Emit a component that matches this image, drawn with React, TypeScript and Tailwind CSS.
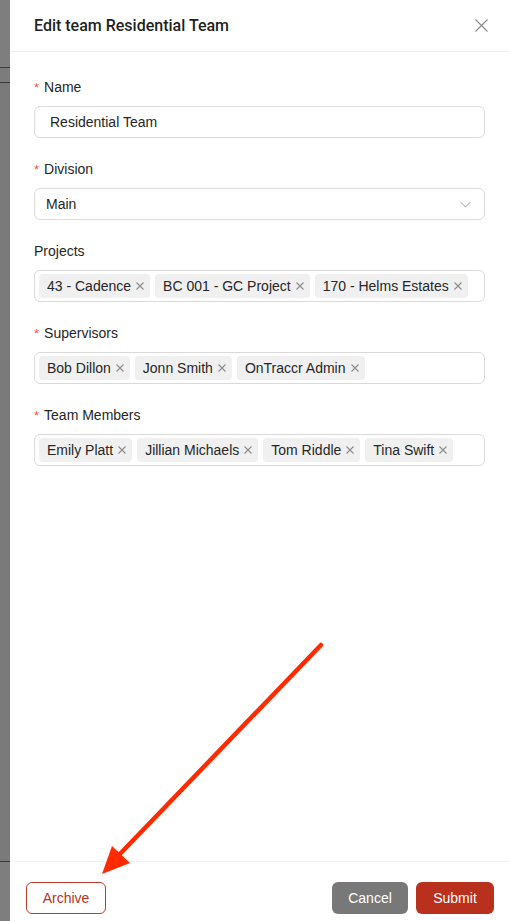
import React from "react";

const font = { fontFamily: '"Liberation Sans", Arial, sans-serif' };

function CloseSmall() {
  return (
    <svg width="8" height="8" viewBox="0 0 8 8" className="shrink-0">
      <path d="M0.5 0.5 L7.5 7.5 M7.5 0.5 L0.5 7.5" stroke="#8c8c8c" strokeWidth="1.1" />
    </svg>
  );
}

function Tag({ text }: { text: string }) {
  return (
    <span className="flex items-center h-6 rounded-[4px] bg-[#f0f0f0] pl-2 pr-[6px] gap-[5px] text-[14px] text-[#262626] whitespace-nowrap">
      {text}
      <CloseSmall />
    </span>
  );
}

function Label({ text, required }: { text: string; required?: boolean }) {
  return (
    <div className="h-[30px] pb-2 flex items-center text-[14px] leading-[22px] text-[#262626]">
      {required && <span className="text-[#ff4d4f] text-[13px] mr-[5px] leading-none">*</span>}
      {text}
    </div>
  );
}

function MultiField({ label, required, tags }: { label: string; required?: boolean; tags: string[] }) {
  return (
    <div className="mb-5">
      <Label text={label} required={required} />
      <div className="h-8 rounded-md border border-[#d9d9d9] flex items-center gap-[5px] pl-[4px]">
        {tags.map((t) => (
          <Tag key={t} text={t} />
        ))}
      </div>
    </div>
  );
}

export default function App() {
  return (
    <div className="relative w-[509px] h-[921px] flex overflow-hidden bg-white" style={font}>
      {/* left overlay strip */}
      <div className="w-[10px] h-full flex flex-col bg-[#7a7a7a]">
        <div className="h-[67px] bg-[#7e7e7e]" />
        <div className="h-[16px] border-t border-b border-[#3a3a3a] bg-[#7c7c7c]" />
        <div className="flex-1" />
        <div className="h-[60px] border-t border-[#3a3a3a] bg-[#7e7e7e]" />
      </div>

      {/* drawer */}
      <div className="flex-1 flex flex-col h-full bg-white">
        <div className="h-[52px] border-b border-[#f0f0f0] flex items-center justify-between pl-6 pr-[21px]">
          <div className="text-[16px] text-[#1f1f1f] font-medium" style={{ fontFamily: 'Roboto, "Liberation Sans", sans-serif' }}>
            Edit team Residential Team
          </div>
          <svg width="13" height="13" viewBox="0 0 13 13">
            <path d="M0.5 0.5 L12.5 12.5 M12.5 0.5 L0.5 12.5" stroke="#8c8c8c" strokeWidth="1.2" />
          </svg>
        </div>

        <div className="flex-1 px-6 pt-6">
          <div className="mb-5">
            <Label text="Name" required />
            <div className="h-8 rounded-md border border-[#d9d9d9] flex items-center px-[15px] text-[14px] text-[#262626]">
              Residential Team
            </div>
          </div>

          <div className="mb-5">
            <Label text="Division" required />
            <div className="h-8 rounded-md border border-[#d9d9d9] flex items-center justify-between pl-[11px] pr-[13px] text-[14px] text-[#262626]">
              Main
              <svg width="11" height="7" viewBox="0 0 11 7">
                <path d="M0.5 0.8 L5.5 6 L10.5 0.8" fill="none" stroke="#bfbfbf" strokeWidth="1.1" />
              </svg>
            </div>
          </div>

          <MultiField label="Projects" tags={["43 - Cadence", "BC 001 - GC Project", "170 - Helms Estates"]} />
          <MultiField label="Supervisors" required tags={["Bob Dillon", "Jonn Smith", "OnTraccr Admin"]} />
          <MultiField label="Team Members" required tags={["Emily Platt", "Jillian Michaels", "Tom Riddle", "Tina Swift"]} />
        </div>

        <div className="h-[60px] border-t border-[#f0f0f0] flex items-start justify-between pt-5 pl-4 pr-[15px]">
          <button className="w-[80px] h-8 rounded-md border border-[#c0392b] text-[#b8321f] text-[14px] bg-white">
            Archive
          </button>
          <div className="flex gap-2">
            <button className="w-[76px] h-8 rounded-md bg-[#787878] text-white text-[14px]">Cancel</button>
            <button className="w-[78px] h-8 rounded-md bg-[#b9301c] text-white text-[14px]">Submit</button>
          </div>
        </div>
      </div>

      {/* annotation arrow */}
      <svg className="absolute inset-0 pointer-events-none" width="509" height="921" viewBox="0 0 509 921">
        <line x1="321" y1="645" x2="118" y2="856" stroke="#ff2a00" strokeWidth="4.5" strokeLinecap="round" />
        <polygon points="102,874 112,846 130,863" fill="#ff2a00" />
      </svg>
    </div>
  );
}
